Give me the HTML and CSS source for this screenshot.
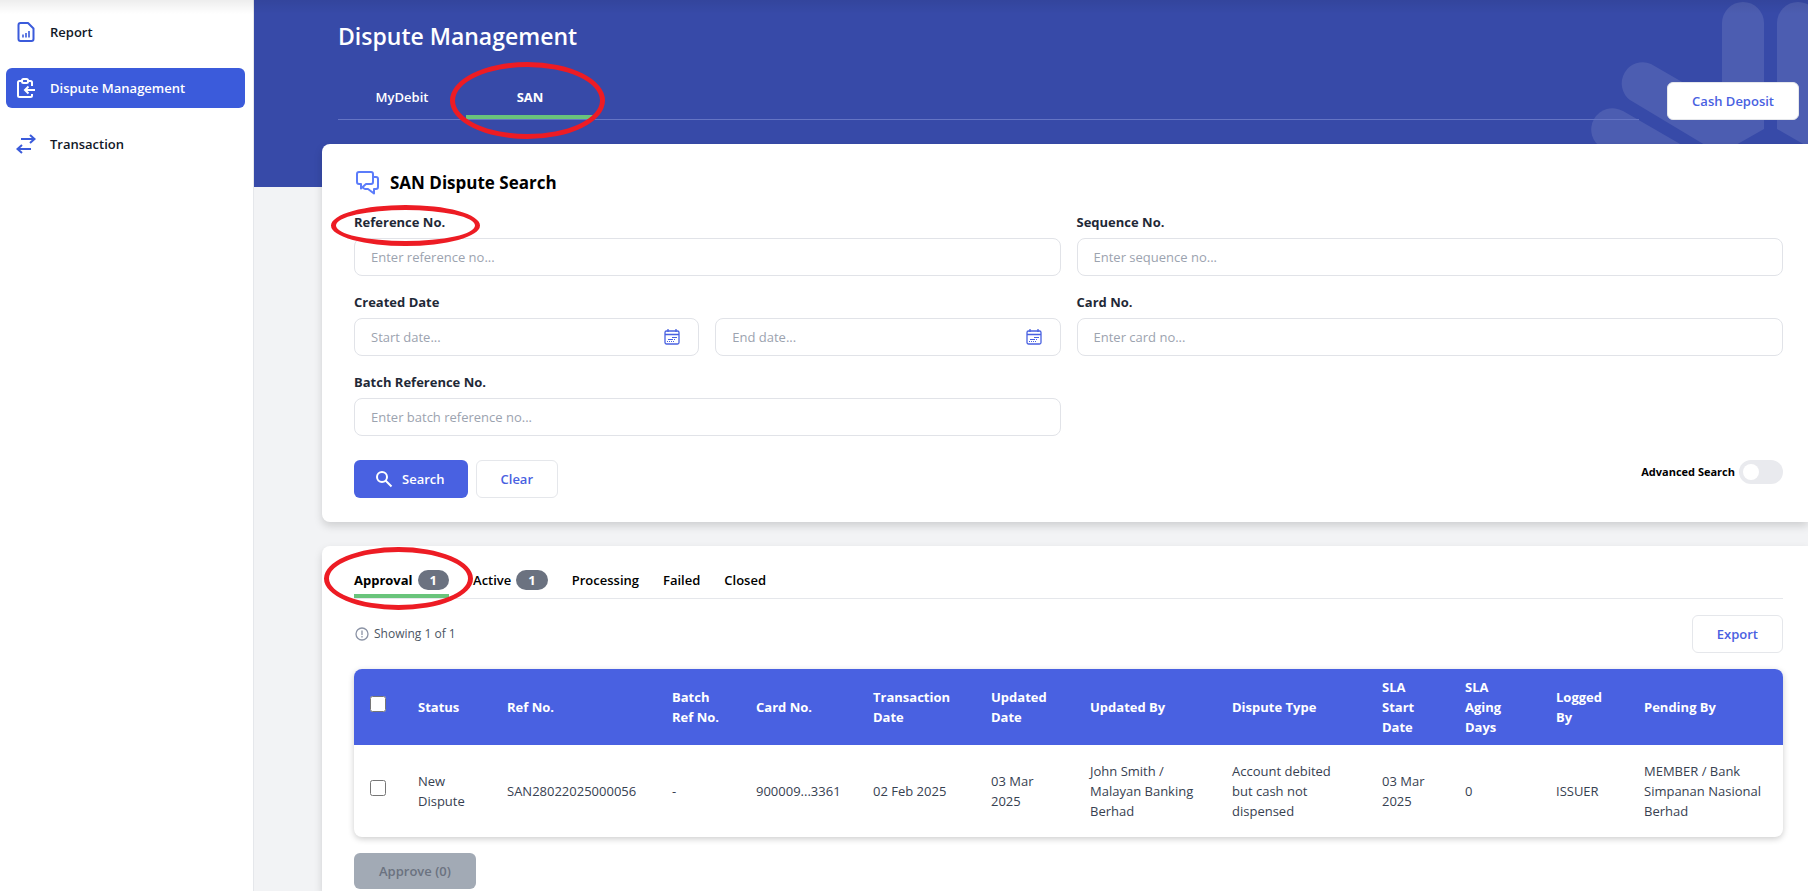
FILE: index.html
```html
<!DOCTYPE html>
<html lang="en">
<head>
    <meta charset="UTF-8">
    <meta name="viewport" content="width=device-width, initial-scale=1.0">
    <title>Dispute Management</title>
    <link rel="stylesheet" href="styles.css">
</head>
<body>
    <aside class="sidebar">
        <nav>
            <a href="#" class="nav-item">
                <svg width="20" height="20" viewBox="0 0 20 20" fill="none" stroke="currentColor" stroke-width="2">
                    <path d="M12 1H4.500Q2.500 1 2.500 3V17Q2.500 19 4.500 19H15.500Q17.500 19 17.500 17V6.500Z" stroke-linejoin="round"/>
                    <path d="M7 12.500V15.500M10 11V15.500M13 9V15.500" stroke-width="1.600"/>
                </svg>
                Report
            </a>
            <a href="#" class="nav-item active">
                <svg width="20" height="20" viewBox="0 0 20 20" fill="none" stroke="currentColor" stroke-width="2">
                    <path d="M6 3H3.500Q2 3 2 4.500V17.500Q2 19 3.500 19H14.500Q16 19 16 17.500V16M12 3H14.500Q16 3 16 4.500V8"/>
                    <rect x="6" y="1" width="6" height="4" rx="1.500"/>
                    <path d="M19 12H9M12.500 8.500L9 12L12.500 15.500"/>
                </svg>
                Dispute Management
            </a>
            <a href="#" class="nav-item">
                <svg width="20" height="20" viewBox="0 0 20 20" fill="none" stroke="currentColor" stroke-width="2">
                    <path d="M5 5H18M14 1L18.500 5L14 9M15 15H2M6 11L1.500 15L6 19"/>
                </svg>
                Transaction
            </a>
        </nav>
    </aside>

    <main class="main">
        <header class="page-header">
            <svg class="header-logo" width="220" height="187" viewBox="0 0 220 187" fill="#fff">
                <path d="M134 23A21 21 0 0 1 176 23V129L132 154L42 100A21 21 0 0 1 63 64L134 105Z"/>
                <path d="M189 23A21 21 0 0 1 231 23V153L189 129Z"/>
                <path d="M14 148A21 21 0 0 1 35 111L132 167V187H83Z"/>
            </svg>
            <h1>Dispute Management</h1>
            <div class="header-row">
                <nav class="tabs">
                    <a href="#" class="tab">MyDebit</a>
                    <a href="#" class="tab active">SAN<span class="mark mark-san"></span></a>
                </nav>
                <button type="button" class="btn btn-outline">Cash Deposit</button>
            </div>
        </header>

        <form class="card search-card">
            <h2>
                <svg width="26" height="26" viewBox="0 0 26 26" fill="none" stroke="currentColor" stroke-width="2" stroke-linejoin="round">
                    <path d="M5 2H17Q19 2 19 4V12Q19 14 17 14H12L7 18.500V14H5Q3 14 3 12V4Q3 2 5 2Z"/>
                    <path d="M19 7H22Q24 7 24 9V17Q24 19 22 19H20V23.500L14 19H11Q9.500 19 9 17"/>
                </svg>
                SAN Dispute Search
            </h2>
            <div class="form-grid">
                <div class="field">
                    <label for="referenceNo">Reference No.<span class="mark mark-reference"></span></label>
                    <div class="input-box"><input type="text" id="referenceNo" placeholder="Enter reference no..."></div>
                </div>
                <div class="field">
                    <label for="sequenceNo">Sequence No.</label>
                    <div class="input-box"><input type="text" id="sequenceNo" placeholder="Enter sequence no..."></div>
                </div>
                <div class="field">
                    <label for="startDate">Created Date</label>
                    <div class="date-range">
                        <div class="input-box">
                            <input type="text" id="startDate" placeholder="Start date...">
                            <svg width="16" height="16" viewBox="0 0 16 16" fill="none" stroke="currentColor">
                                <rect x="1" y="2" width="14" height="13" rx="1.500" stroke-width="1.300"/>
                                <path d="M1 5.500H15M4 0V3M12 0V3" stroke-width="1.300"/>
                                <path d="M8 8.500H13M4 10.500H9M10 10.500H11M3 12.500H4M5 12.500H6M7 12.500H8M9 12.500H10"/>
                            </svg>
                        </div>
                        <div class="input-box">
                            <input type="text" id="endDate" aria-label="End date" placeholder="End date...">
                            <svg width="16" height="16" viewBox="0 0 16 16" fill="none" stroke="currentColor">
                                <rect x="1" y="2" width="14" height="13" rx="1.500" stroke-width="1.300"/>
                                <path d="M1 5.500H15M4 0V3M12 0V3" stroke-width="1.300"/>
                                <path d="M8 8.500H13M4 10.500H9M10 10.500H11M3 12.500H4M5 12.500H6M7 12.500H8M9 12.500H10"/>
                            </svg>
                        </div>
                    </div>
                </div>
                <div class="field">
                    <label for="cardNo">Card No.</label>
                    <div class="input-box"><input type="text" id="cardNo" placeholder="Enter card no..."></div>
                </div>
                <div class="field">
                    <label for="batchNo">Batch Reference No.</label>
                    <div class="input-box"><input type="text" id="batchNo" placeholder="Enter batch reference no..."></div>
                </div>
            </div>
            <div class="form-actions">
                <button type="button" class="btn btn-primary">
                    <svg width="18" height="18" viewBox="0 0 18 18" fill="none" stroke="currentColor" stroke-width="2">
                        <circle cx="7" cy="7" r="5"/>
                        <path d="M10.500 10.500L16.500 16.500"/>
                    </svg>
                    Search
                </button>
                <button type="reset" class="btn btn-outline">Clear</button>
                <label class="advanced" for="advanced">
                    Advanced Search
                    <input type="checkbox" id="advanced" class="toggle">
                </label>
            </div>
        </form>

        <section class="card result-card">
            <nav class="status-tabs">
                <a href="#" class="status-tab active">Approval <span class="badge">1</span><span class="mark mark-approval"></span></a>
                <a href="#" class="status-tab">Active <span class="badge">1</span></a>
                <a href="#" class="status-tab">Processing</a>
                <a href="#" class="status-tab">Failed</a>
                <a href="#" class="status-tab">Closed</a>
            </nav>
            <div class="result-bar">
                <p class="showing">
                    <svg width="16" height="16" viewBox="0 0 16 16" fill="none" stroke="currentColor">
                        <circle cx="8" cy="8" r="6" stroke-width="1.300"/>
                        <path d="M8 4.500V9M8 10V11.500" stroke-width="1.300"/>
                    </svg>
                    Showing 1 of 1
                </p>
                <button type="button" class="btn btn-outline">Export</button>
            </div>
            <table class="dispute-table">
                <colgroup>
                    <col class="w-check"><col class="w-status"><col class="w-ref"><col class="w-batch">
                    <col class="w-card"><col class="w-trans"><col class="w-updated"><col class="w-updated-by">
                    <col class="w-type"><col class="w-sla"><col class="w-aging"><col class="w-logged"><col class="w-pending">
                </colgroup>
                <thead>
                    <tr>
                        <th><input type="checkbox" aria-label="Select all"></th>
                        <th>Status</th>
                        <th>Ref No.</th>
                        <th>Batch Ref No.</th>
                        <th>Card No.</th>
                        <th>Transaction Date</th>
                        <th>Updated Date</th>
                        <th>Updated By</th>
                        <th>Dispute Type</th>
                        <th>SLA Start Date</th>
                        <th>SLA Aging Days</th>
                        <th>Logged By</th>
                        <th>Pending By</th>
                    </tr>
                </thead>
                <tbody>
                    <tr>
                        <td><input type="checkbox" aria-label="Select dispute"></td>
                        <td>New Dispute</td>
                        <td>SAN28022025000056</td>
                        <td>-</td>
                        <td>900009...3361</td>
                        <td>02 Feb 2025</td>
                        <td>03 Mar 2025</td>
                        <td>John Smith / Malayan Banking Berhad</td>
                        <td>Account debited but cash not dispensed</td>
                        <td>03 Mar 2025</td>
                        <td>0</td>
                        <td>ISSUER</td>
                        <td>MEMBER / Bank Simpanan Nasional Berhad</td>
                    </tr>
                </tbody>
            </table>
            <button type="button" class="btn btn-approve" disabled>Approve (0)</button>
        </section>
    </main>
</body>
</html>
```

FILE: styles.css
```css
* {
    box-sizing: border-box;
    margin: 0;
    padding: 0;
}
body {
    display: flex;
    min-height: 100vh;
    font-family: 'Open Sans', 'Noto Sans', sans-serif;
    font-size: 13px;
    line-height: 20px;
    color: #000;
    background-color: #f2f3f5;
}
/* shadow of the top bar */
body::before {
    content: "";
    position: absolute;
    top: 0;
    left: 0;
    right: 0;
    height: 14px;
    background: linear-gradient(rgba(0, 0, 0, 0.07), rgba(0, 0, 0, 0));
    z-index: 2;
}
a {
    color: inherit;
    text-decoration: none;
}
input, button {
    font: inherit;
}

.sidebar {
    width: 254px;
    flex-shrink: 0;
    padding: 12px 8px 0 6px;
    background-color: #fff;
    border-right: 1px solid #e5e7eb;
}
.nav-item {
    display: flex;
    align-items: center;
    gap: 14px;
    height: 40px;
    padding: 0 10px;
    margin-bottom: 16px;
    border-radius: 6px;
    font-weight: 600;
    color: #111827;
}
.nav-item svg {
    color: #3b5bdb;
}
.nav-item.active {
    background-color: #3b5bdb;
    color: #fff;
}
.nav-item.active svg {
    color: #fff;
}

.main {
    display: flex;
    flex-direction: column;
    flex: 1;
    min-width: 0;
}
.page-header {
    position: relative;
    height: 187px;
    padding: 20px 9px 0 84px;
    background-color: #374aa8;
    color: #fff;
    overflow: hidden;
}
.header-logo {
    position: absolute;
    top: 0;
    right: 0;
    opacity: 0.1;
}
.page-header h1 {
    font-size: 23px;
    line-height: 32px;
    font-weight: 600;
    margin-bottom: 30px;
}
.header-row {
    display: flex;
    align-items: flex-end;
    gap: 28px;
    position: relative;
}
.tabs {
    display: flex;
    flex: 1;
    border-bottom: 1px solid #6474c4;
}
.tab {
    position: relative;
    width: 128px;
    padding-bottom: 8px;
    border-bottom: 4px solid transparent;
    text-align: center;
    font-weight: 600;
}
.tab.active {
    border-color: #69c47b;
    font-weight: 700;
}

/* red rings drawn over the page */
.mark {
    position: absolute;
    border: 5px solid #ed1c24;
    border-radius: 50%;
    pointer-events: none;
    z-index: 3;
}
.mark-san {
    top: -25px;
    left: -16px;
    width: 155px;
    height: 77px;
}
.mark-reference {
    top: -7px;
    left: -23px;
    width: 149px;
    height: 41px;
}
.mark-approval {
    top: -23px;
    left: -30px;
    width: 149px;
    height: 63px;
}

.btn {
    display: inline-flex;
    align-items: center;
    justify-content: center;
    gap: 10px;
    height: 38px;
    padding: 0 24px;
    border: 1px solid transparent;
    border-radius: 6px;
    font-weight: 600;
    cursor: pointer;
}
.btn-primary {
    gap: 9px;
    padding: 0 22px 0 20px;
    background-color: #4961e1;
    color: #fff;
}
.btn-outline {
    background-color: #fff;
    border-color: #e5e7eb;
    color: #4961e1;
}
.btn-approve {
    height: 36px;
    margin-top: 16px;
    background-color: #a2aab5;
    color: #6b7280;
    cursor: default;
}

.card {
    position: relative;
    margin-left: 68px;
    background-color: #fff;
    box-shadow: 0 4px 8px rgba(0, 0, 0, 0.15);
}
.search-card {
    margin-top: -43px;
    padding: 24px 25px 24px 32px;
    border-radius: 8px 0 0 8px;
}
.search-card h2 {
    display: flex;
    align-items: center;
    gap: 10px;
    font-size: 17px;
    line-height: 30px;
    font-weight: 700;
    margin-bottom: 14px;
}
.search-card h2 svg {
    color: #5b7cfa;
}
.form-grid {
    display: grid;
    grid-template-columns: 1fr 1fr;
    gap: 16px;
}
.field label {
    display: inline-block;
    position: relative;
    margin-bottom: 6px;
    font-weight: 700;
    color: #1f2937;
    vertical-align: top;
}
.input-box {
    display: flex;
    align-items: center;
    flex: 1;
    height: 38px;
    padding: 0 18px 0 16px;
    border: 1px solid #e1e3e8;
    border-radius: 8px;
    color: #4961e1;
}
.input-box input {
    flex: 1;
    min-width: 0;
    border: none;
    outline: none;
    background: none;
    color: #1f2937;
}
.input-box input::placeholder {
    color: #9ca3af;
}
.date-range {
    display: flex;
    gap: 16px;
}
.form-actions {
    display: flex;
    align-items: flex-start;
    gap: 8px;
    margin-top: 24px;
}
.advanced {
    display: flex;
    align-items: center;
    gap: 4px;
    margin-left: auto;
    font-size: 11px;
    font-weight: 700;
}
.toggle {
    appearance: none;
    width: 44px;
    height: 24px;
    padding: 4px;
    border-radius: 12px;
    background-color: #e9eaee;
}
.toggle::before {
    content: "";
    display: block;
    width: 16px;
    height: 16px;
    border-radius: 50%;
    background-color: #fff;
}
.toggle:checked {
    background-color: #4961e1;
}

.result-card {
    flex: 1;
    margin-top: 24px;
    padding: 24px 25px 0 32px;
    border-radius: 8px 0 0 0;
}
.status-tabs {
    display: flex;
    gap: 24px;
    border-bottom: 1px solid #e5e7eb;
}
.status-tab {
    display: flex;
    position: relative;
    gap: 5px;
    padding-bottom: 4px;
    border-bottom: 4px solid transparent;
    font-weight: 600;
}
.status-tab.active {
    border-color: #69c47b;
    font-weight: 700;
}
.badge {
    padding: 0 12px;
    border-radius: 10px;
    background-color: #6b7280;
    color: #fff;
    font-weight: 700;
}
.result-bar {
    display: flex;
    justify-content: space-between;
    align-items: center;
    margin: 16px 0;
}
.showing {
    display: flex;
    align-items: center;
    gap: 4px;
    font-size: 12px;
    color: #4b5563;
}
.showing svg {
    color: #8b93a5;
}

.dispute-table {
    width: 100%;
    table-layout: fixed;
    border-spacing: 0;
    border-radius: 8px;
    overflow: hidden;
    box-shadow: 0 2px 6px rgba(0, 0, 0, 0.2);
}
.dispute-table th {
    padding: 8px 16px;
    background-color: #4961e1;
    color: #fff;
    font-weight: 700;
    text-align: left;
}
.dispute-table td {
    padding: 16px;
    color: #374151;
}
.dispute-table td:nth-child(3),
.dispute-table td:nth-child(5),
.dispute-table td:nth-child(6) {
    white-space: nowrap;
}
.dispute-table input {
    display: block;
    width: 16px;
    height: 16px;
    margin-bottom: 6px;
}
.w-check { width: 48px; }
.w-status { width: 89px; }
.w-ref { width: 165px; }
.w-batch { width: 84px; }
.w-card { width: 117px; }
.w-trans { width: 118px; }
.w-updated { width: 99px; }
.w-updated-by { width: 142px; }
.w-type { width: 150px; }
.w-sla { width: 83px; }
.w-aging { width: 91px; }
.w-logged { width: 88px; }
.w-pending { width: 155px; }
```
